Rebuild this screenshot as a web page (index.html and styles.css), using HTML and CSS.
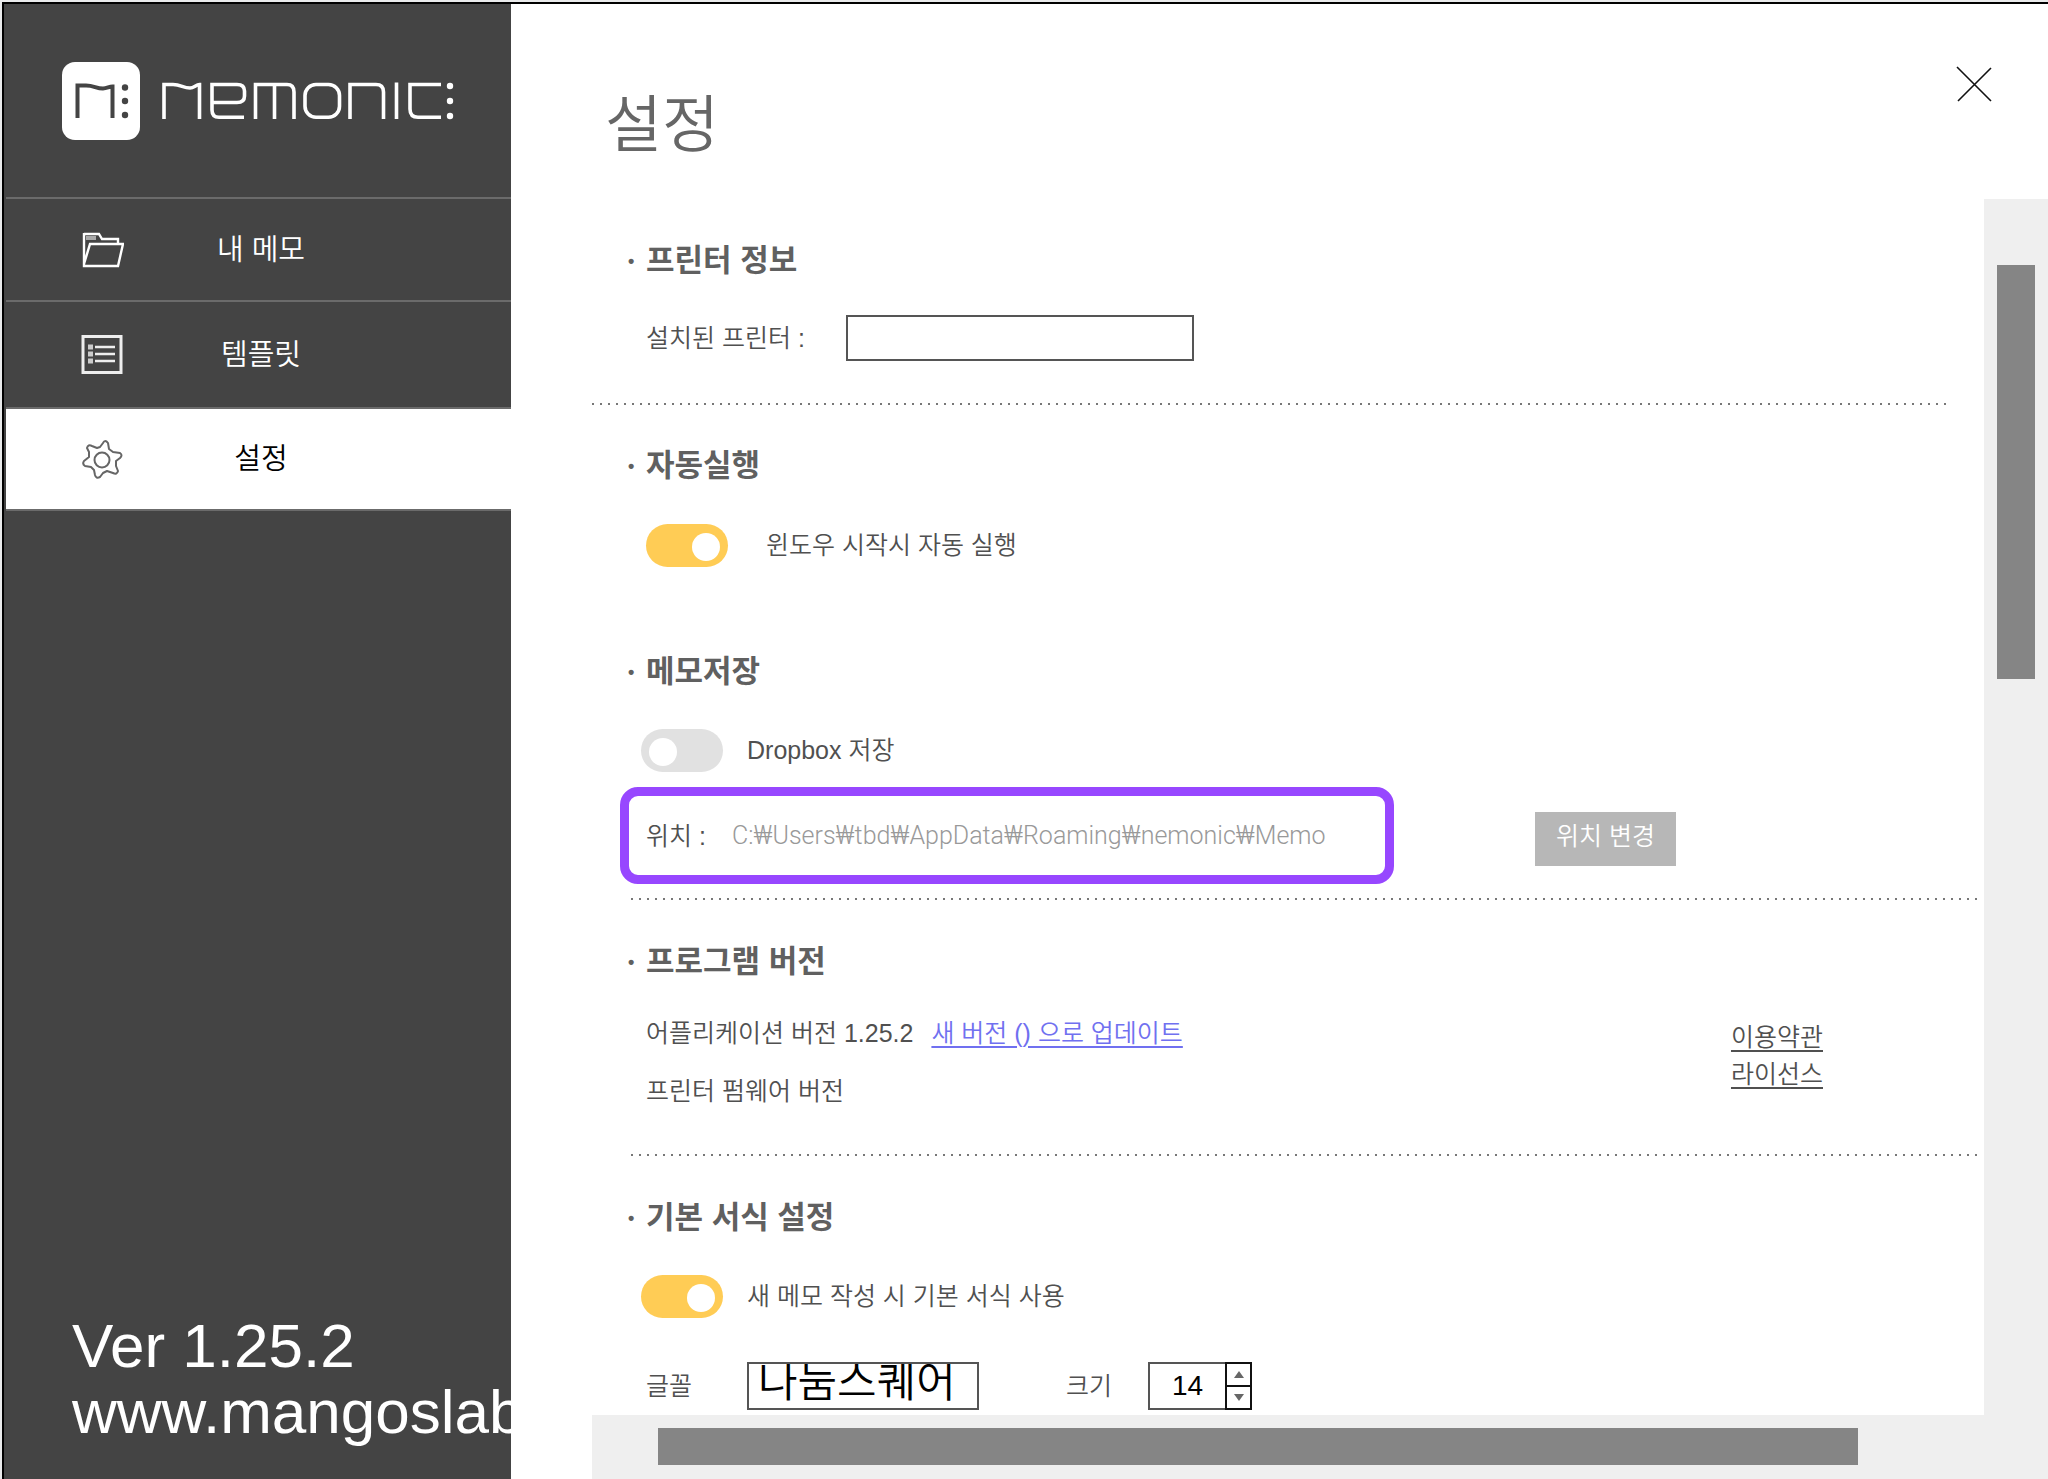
FILE: index.html
```html
<!DOCTYPE html>
<html lang="ko">
<head>
<meta charset="utf-8">
<meta name="viewport" content="width=device-width, initial-scale=1">
<title>nemonic 설정</title>
<link rel="stylesheet" href="styles.css">
</head>
<body>
<div class="window">
  <aside class="sidebar">
    <div class="brand">
      <svg class="logo" width="78" height="78" viewBox="62 62 78 78" role="img" aria-label="nemonic">
        <rect x="62" y="62" width="78" height="78" rx="13" fill="#fff"/>
        <g fill="none" stroke="#444" stroke-width="4">
          <path d="M77.500 118V85.500H86C94 85.500 96 88.500 103 88.500C107 88.500 109 86.500 112.500 86.500V118"/>
        </g>
        <g fill="#444"><circle cx="125" cy="87.500" r="3.200"/><circle cx="125" cy="101" r="3.200"/><circle cx="125" cy="115" r="3.200"/></g>
      </svg>
      <svg class="wordmark" width="292" height="38" viewBox="162 83 292 38" aria-hidden="true">
        <g fill="none" stroke="#fff" stroke-width="3.600">
          <path d="M164 120V85.500H173C181 85.500 183 89 190 89C194 89 196 85.500 199.500 85.500V120"/>
          <path d="M212 103.500H237Q244.500 103.500 244.500 97V92Q244.500 85.500 237 85.500H212V111Q212 118.300 219 118.300H244"/>
          <path d="M255.500 120V85.500H287Q294 85.500 294 93V120M274.500 85.500V120"/>
          <rect x="305" y="85.500" width="34.500" height="32.800" rx="11"/>
          <path d="M350 120V85.500H376Q383.500 85.500 383.500 93V120M396.500 83.500V120"/>
          <path d="M441 85.500H410V110Q410 118.300 418 118.300H441"/>
        </g>
        <g fill="#fff"><circle cx="450" cy="87" r="3.200"/><circle cx="450" cy="102" r="3.200"/><circle cx="450" cy="117" r="3.200"/></g>
      </svg>
    </div>
    <nav class="menu">
      <a class="menu-item first" href="#memo">
        <svg class="menu-icon" width="44" height="40" viewBox="0 0 44 40" fill="none" stroke="#fff" stroke-width="2.400">
          <path d="M4 4H19L22 9H38V14"/><path d="M4 3V36H38L43 14H10L4 34"/><path d="M6 8H16" stroke="#aaa" stroke-width="4"/>
        </svg>
        <span class="menu-label">내 메모</span>
      </a>
      <a class="menu-item second" href="#template">
        <svg class="menu-icon" width="44" height="40" viewBox="0 0 44 40" fill="none" stroke="#eee">
          <path d="M3 1.500H41V37.500H3Z" stroke-width="3"/>
          <path d="M15 12H35M15 19H35M15 26H35" stroke-width="2.500"/>
          <path d="M8 12H13M8 19H13M8 26H13" stroke="#ccc" stroke-width="5"/>
        </svg>
        <span class="menu-label">템플릿</span>
      </a>
      <a class="menu-item active" href="#settings" aria-current="page">
        <svg class="menu-icon" width="44" height="40" viewBox="0 0 44 40" fill="none" stroke="#666" stroke-width="2" stroke-linejoin="round">
          <path d="M23 4Q25 0 28 4L29 10L33 13L40 14Q43 16 40 19L36 22V27L38 32Q37 36 33 34L27 32L23 34L20 38Q16 40 15 36L14 31L11 28L5 27Q2 25 4 22L9 18V13L7 9Q8 5 12 7L17 9L20 8Z"/>
          <circle cx="22" cy="21" r="7.500"/>
        </svg>
        <span class="menu-label">설정</span>
      </a>
    </nav>
    <p class="about">Ver 1.25.2<br>www.mangoslab</p>
  </aside>

  <main class="main">
    <header class="header">
      <h1 class="title">설정</h1>
      <button class="close" type="button" aria-label="닫기">
        <svg width="36" height="36" viewBox="0 0 36 36" fill="none" stroke="#111" stroke-width="1.600"><path d="M1 1L35 35M35 2L2 35"/></svg>
      </button>
    </header>

    <div class="viewport">
      <form class="content">
        <section class="section printer">
          <h2 class="heading"><span class="dot">•</span>프린터 정보</h2>
          <div class="row">
            <label class="printer-label" for="printer">설치된 프린터 :</label>
            <input class="printer-input" id="printer" type="text">
          </div>
        </section>
        <hr class="rule rule-first">

        <section class="section autorun">
          <h2 class="heading"><span class="dot">•</span>자동실행</h2>
          <div class="row row-wide">
            <input class="switch" id="autorun" type="checkbox" checked>
            <label for="autorun">윈도우 시작시 자동 실행</label>
          </div>
        </section>

        <section class="section storage">
          <h2 class="heading"><span class="dot">•</span>메모저장</h2>
          <div class="row row-switch">
            <input class="switch" id="dropbox" type="checkbox">
            <label for="dropbox">Dropbox 저장</label>
          </div>
          <div class="location">
            <div class="path-box">
              <span class="path-label">위치 :</span>
              <span class="path">C:₩Users₩tbd₩AppData₩Roaming₩nemonic₩Memo</span>
            </div>
            <button class="change" type="button">위치 변경</button>
          </div>
        </section>
        <hr class="rule">

        <section class="section version">
          <h2 class="heading"><span class="dot">•</span>프로그램 버전</h2>
          <div class="version-body">
            <div class="version-list">
              <p class="line">어플리케이션 버전 1.25.2<a class="update" href="#update">새 버전 () 으로 업데이트</a></p>
              <p class="line">프린터 펌웨어 버전</p>
            </div>
            <div class="legal">
              <a href="#terms">이용약관</a>
              <a href="#license">라이선스</a>
            </div>
          </div>
        </section>
        <hr class="rule">

        <section class="section format">
          <h2 class="heading"><span class="dot">•</span>기본 서식 설정</h2>
          <div class="row row-switch">
            <input class="switch" id="format" type="checkbox" checked>
            <label for="format">새 메모 작성 시 기본 서식 사용</label>
          </div>
          <div class="row font-row">
            <label class="font-label" for="font">글꼴</label>
            <button class="font-field" id="font" type="button">나눔스퀘어</button>
            <label class="size-label" for="size">크기</label>
            <div class="stepper">
              <input class="size-input" id="size" type="number" value="14">
              <div class="steps">
                <button class="step" type="button" aria-label="크게"><svg width="10" height="7" viewBox="0 0 10 7"><path d="M5 0L10 7H0Z" fill="#666"/></svg></button>
                <button class="step" type="button" aria-label="작게"><svg width="10" height="7" viewBox="0 0 10 7"><path d="M0 0H10L5 7Z" fill="#666"/></svg></button>
              </div>
            </div>
          </div>
        </section>
      </form>
      <div class="track track-y"><div class="thumb"></div></div>
      <div class="track track-x"><div class="thumb"></div></div>
      <div class="corner"></div>
    </div>
  </main>
</div>
</body>
</html>
```
FILE: styles.css
```css
* { box-sizing: border-box; }

body {
  margin: 0;
  background: #e9eaeb;
  color: #505050;
  font-family: "Liberation Sans", "Noto Sans CJK KR", sans-serif;
  font-size: 25px;
  font-weight: 350;
  line-height: 36px;
}

h1, h2, p { margin: 0; font-weight: inherit; }
button, input { font: inherit; color: inherit; border-radius: 0; }

.window {
  display: flex;
  height: 100vh;
  padding: 2px 0 0 2px;
  overflow: hidden;
}

/* Sidebar */
.sidebar {
  flex: none;
  display: flex;
  flex-direction: column;
  width: 509px;
  border: solid #000;
  border-width: 2px 0 0 2px;
  background: #444;
  color: #fff;
}

.brand {
  display: flex;
  align-items: center;
  gap: 22px;
  height: 193px;
  padding: 0 0 0 58px;
}
.logo, .wordmark { flex: none; }

.menu { margin-left: 2px; }
.menu-item {
  display: flex;
  align-items: center;
  height: 104px;
  border-top: 2px solid #6b6b6b;
  padding: 0 60px 0 74px;
  color: #fff;
  font-size: 29px;
  text-decoration: none;
}
.menu-icon { flex: none; }
.menu-label { width: 276px; padding-right: 2px; text-align: center; }
.first { height: 103px; }
.second { height: 107px; }
.active { background: #fff; color: #000; border-bottom: 2px solid #6b6b6b; }

.about {
  margin-top: auto;
  padding: 0 0 34px 68px;
  overflow: hidden;
  white-space: nowrap;
  font-size: 62px;
  line-height: 66px;
}

/* Main panel */
.main {
  flex: 1;
  min-width: 0;
  display: flex;
  flex-direction: column;
  border-top: 2px solid #000;
  background: #fff;
}
.header {
  flex: none;
  display: flex;
  justify-content: space-between;
  height: 195px;
  padding: 62px 56px 0 94px;
}
.title { color: #666; font-size: 62px; line-height: 120px; }
.close { align-self: flex-start; width: 36px; height: 36px; padding: 0; border: 0; background: none; }
.close svg { display: block; }

.viewport {
  flex: 1;
  min-height: 0;
  display: grid;
  grid-template-columns: minmax(0, 1fr) 64px;
  grid-template-rows: minmax(0, 1fr) 64px;
  padding-left: 81px;
}
.content { overflow: hidden; }

.track { background: #efefef; }
.track-y { padding: 66px 13px 0; }
.track-y .thumb { width: 100%; height: 36%; background: #858585; }
.track-x { padding: 13px 126px 14px 66px; }
.track-x .thumb { height: 100%; background: #858585; }
.corner { background: #efefef; }

/* Sections */
.section { padding-left: 54px; }
.heading {
  display: flex;
  height: 44px;
  margin-left: -18px;
  font-size: 31px;
  font-weight: 700;
  line-height: 44px;
  color: #606060;
}
.dot { width: 18px; font-size: 18px; }
.row { display: flex; align-items: center; }

.rule {
  height: 2px;
  margin: 0 2px 0 39px;
  border: 0;
  background: repeating-linear-gradient(90deg, #777 0 2px, transparent 2px 8px);
}
.rule-first { margin: 0 36px 0 0; }

.printer { height: 204px; padding-top: 40px; }
.printer .row { margin-top: 32px; }
.printer-label { width: 200px; }
.printer-input { width: 348px; height: 46px; border: 2px solid #555; background: #fff; padding: 0 10px; }

.autorun { height: 205px; padding-top: 39px; }
.row-wide { gap: 38px; margin-top: 36px; }

.switch {
  appearance: none;
  flex: none;
  display: flex;
  align-items: center;
  width: 82px;
  height: 43px;
  margin: 0;
  padding: 2px 8px 0;
  border-radius: 22px;
  background: #e1e1e1;
}
.switch::before { content: ""; width: 28px; height: 28px; border-radius: 50%; background: #fff; }
.switch:checked { background: #ffcc55; justify-content: flex-end; }
.switch + label { margin-bottom: 2px; }

.storage { height: 288px; padding-top: 40px; }
.row-switch { gap: 24px; margin: 35px 0 0 -5px; }
.location { display: flex; align-items: center; margin: 15px 0 0 -26px; }
.path-box {
  display: flex;
  align-items: center;
  width: 774px;
  height: 97px;
  padding-left: 17px;
  border: 9px solid #9747ff;
  border-radius: 18px;
}
.path-label { width: 86px; }
.path { color: #999; font-family: Roboto, "Noto Sans CJK KR", sans-serif; font-weight: 300; white-space: nowrap; }
.change { width: 141px; height: 54px; margin: 6px 0 0 141px; padding: 0 0 6px; border: 0; background: #b7b7b7; color: #fff; }

.version { height: 254px; padding-top: 40px; }
.version-body { display: flex; justify-content: space-between; padding-right: 161px; }
.line { margin-top: 31px; height: 36px; white-space: nowrap; }
.line + .line { margin-top: 22px; }
.update { margin-left: 18px; color: #7070f0; text-underline-offset: 4px; }
.legal { display: flex; flex-direction: column; padding-top: 35px; line-height: 37px; }
.legal a { color: #505050; text-underline-offset: 4px; }

.format { padding-top: 40px; }
.font-row { margin-top: 44px; }
.font-label { width: 101px; }
.font-field {
  display: flex;
  align-items: flex-end;
  width: 232px;
  height: 48px;
  padding: 0 0 2px 9px;
  border: 2px solid #555;
  background: #fff;
  overflow: hidden;
  color: #000;
  font-size: 43px;
  line-height: 48px;
  white-space: nowrap;
}
.size-label { width: 82px; margin-left: 87px; }
.stepper { display: flex; width: 104px; height: 48px; }
.size-input {
  appearance: textfield;
  width: 77px;
  padding: 0;
  border: 2px solid #555;
  border-right: 0;
  background: #fff;
  color: #000;
  font-size: 28px;
  text-align: center;
}
.size-input::-webkit-inner-spin-button { display: none; }
.steps { flex: 1; display: flex; flex-direction: column; border: 2px solid #111; }
.step { flex: 1; display: flex; align-items: center; justify-content: center; padding: 0; border: 0; background: #fff; }
.step + .step { border-top: 2px solid #111; }
```
